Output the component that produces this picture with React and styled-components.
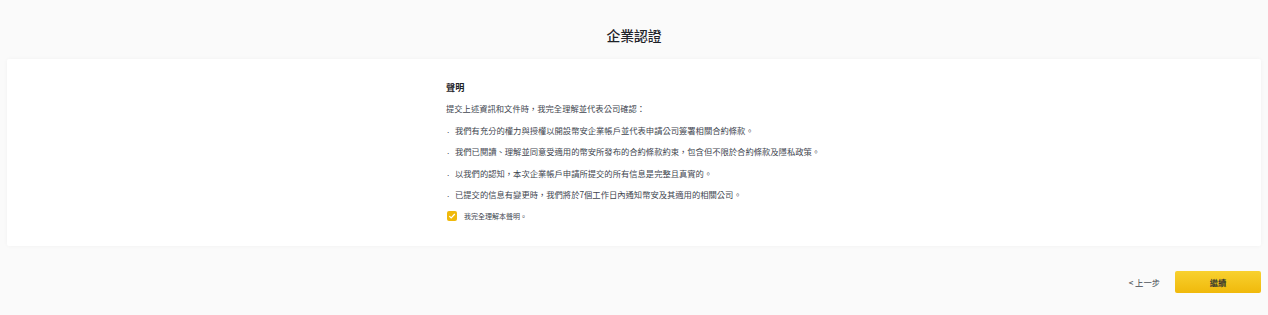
import React from 'react';
import styled, { createGlobalStyle } from 'styled-components';

const GlobalStyle = createGlobalStyle`
  html, body {
    margin: 0;
    padding: 0;
    background: #fafafa;
    font-family: "Noto Sans CJK TC", "Noto Sans", "Liberation Sans", sans-serif;
  }
`;

const Page = styled.div`
  min-height: 315px;
  display: flex;
  flex-direction: column;
  background: #fafafa;
`;

const Header = styled.header`
  height: 59px;
  display: flex;
  align-items: center;
  justify-content: center;
`;

const Title = styled.h1`
  margin: 0;
  padding-top: 11px;
  font-size: 13.8px;
  font-weight: 500;
  color: #1e2329;
`;

const Card = styled.section`
  margin: 0 7px;
  background: #fff;
  border-radius: 2px;
  box-shadow: 0 0 4px rgba(0, 0, 0, 0.04);
  padding: 22px 0 24px;
`;

const Content = styled.div`
  width: 376px;
  margin: 0 auto;
  display: flex;
  flex-direction: column;
  white-space: nowrap;
`;

const Heading = styled.h2`
  margin: 0;
  font-size: 9.2px;
  line-height: 12px;
  font-weight: 700;
  color: #1e2329;
`;

const Para = styled.p`
  margin: ${p => (p.$first ? '9px' : '9.5px')} 0 0;
  font-size: 8.3px;
  line-height: 12px;
  color: #41464f;
  display: flex;
`;

const Bullet = styled.span`
  width: 8px;
  flex: none;
  padding-left: 1px;
  font-family: "Liberation Sans", sans-serif;
`;

const CheckRow = styled.label`
  margin-top: 10px;
  height: 12px;
  display: flex;
  align-items: center;
  gap: 7px;
  padding-left: 1px;
  font-size: 7px;
  color: #41464f;
`;

const Box = styled.span`
  width: 10px;
  height: 10px;
  border-radius: 2px;
  background: #f0b90b;
  display: flex;
  align-items: center;
  justify-content: center;
`;

const Footer = styled.footer`
  display: flex;
  justify-content: flex-end;
  align-items: center;
  gap: 15px;
  padding: 25px 7px 0;
`;

const BackLink = styled.a`
  font-size: 8.3px;
  color: #41464f;
  cursor: pointer;
`;

const NextButton = styled.button`
  width: 86px;
  height: 22px;
  border: none;
  border-radius: 2px;
  background: linear-gradient(180deg, #f8d12f 0%, #f0b90b 100%);
  color: #212833;
  font-family: inherit;
  font-size: 8.3px;
  font-weight: 500;
  cursor: pointer;
`;

const items = [
  '我們有充分的權力與授權以開設幣安企業帳戶並代表申請公司簽署相關合約條款。',
  '我們已閱讀、理解並同意受適用的幣安所發布的合約條款約束，包含但不限於合約條款及隱私政策。',
  '以我們的認知，本次企業帳戶申請所提交的所有信息是完整且真實的。',
  '已提交的信息有變更時，我們將於7個工作日內通知幣安及其適用的相關公司。',
];

export default function App() {
  return (
    <Page>
      <GlobalStyle />
      <Header>
        <Title>企業認證</Title>
      </Header>
      <Card>
        <Content>
          <Heading>聲明</Heading>
          <Para $first>提交上述資訊和文件時，我完全理解並代表公司確認：</Para>
          {items.map(t => (
            <Para key={t}>
              <Bullet>.</Bullet>
              {t}
            </Para>
          ))}
          <CheckRow>
            <Box>
              <svg width="8" height="8" viewBox="0 0 8 8">
                <path d="M1.3 4.1 L3.2 6 L6.8 2" fill="none" stroke="#fff" strokeWidth="1.2" />
              </svg>
            </Box>
            我完全理解本聲明。
          </CheckRow>
        </Content>
      </Card>
      <Footer>
        <BackLink>&lt; 上一步</BackLink>
        <NextButton>繼續</NextButton>
      </Footer>
    </Page>
  );
}
